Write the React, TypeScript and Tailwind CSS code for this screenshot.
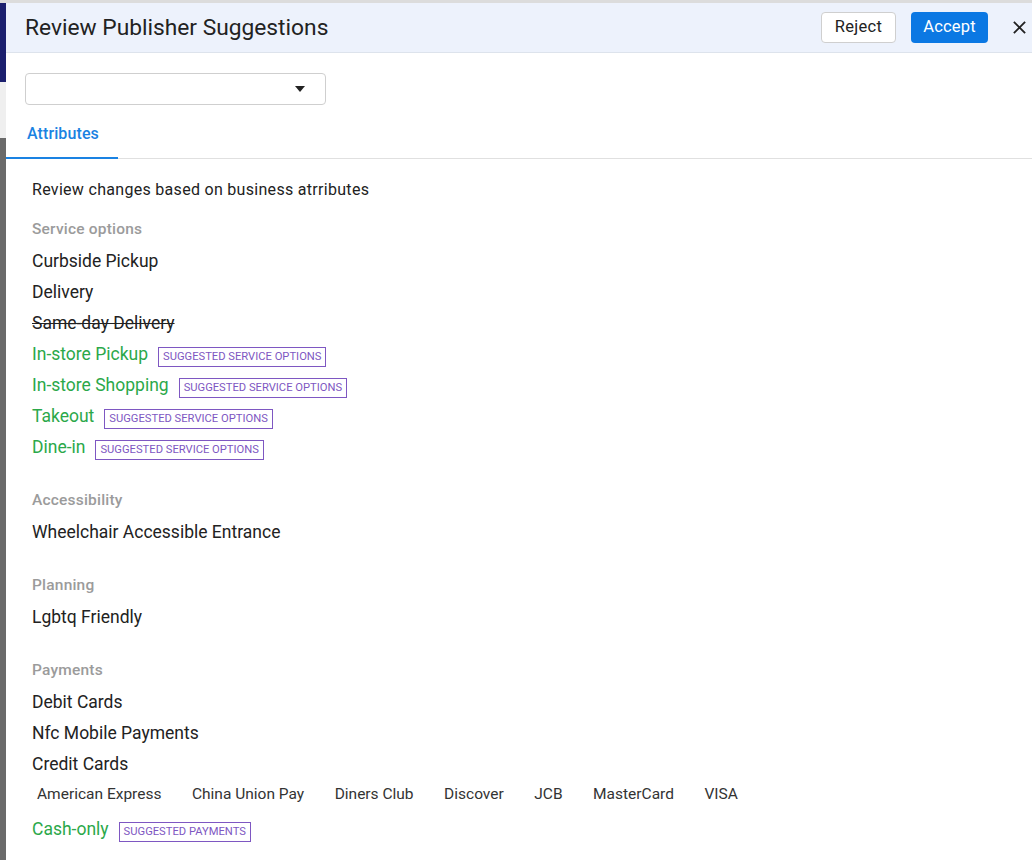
import React from 'react'

type Item = { label: string; kind?: 'normal' | 'removed' | 'suggested'; tag?: string }

interface Section {
  title: string
  items: Item[]
}

const sections: Section[] = [
  {
    title: 'Service options',
    items: [
      { label: 'Curbside Pickup' },
      { label: 'Delivery' },
      { label: 'Same-day Delivery', kind: 'removed' },
      { label: 'In-store Pickup', kind: 'suggested', tag: 'Suggested service options' },
      { label: 'In-store Shopping', kind: 'suggested', tag: 'Suggested service options' },
      { label: 'Takeout', kind: 'suggested', tag: 'Suggested service options' },
      { label: 'Dine-in', kind: 'suggested', tag: 'Suggested service options' },
    ],
  },
  { title: 'Accessibility', items: [{ label: 'Wheelchair Accessible Entrance' }] },
  { title: 'Planning', items: [{ label: 'Lgbtq Friendly' }] },
]

const cards = ['American Express', 'China Union Pay', 'Diners Club', 'Discover', 'JCB', 'MasterCard', 'VISA']

const Row = ({ item }: { item: Item }) => (
  <div className="flex items-center h-[31px]">
    <span
      className={
        item.kind === 'suggested'
          ? 'text-[17.5px] text-[#2ba84a]'
          : item.kind === 'removed'
          ? 'text-[17.5px] text-[#222] line-through'
          : 'text-[17.5px] text-[#222]'
      }
    >
      {item.label}
    </span>
    {item.tag && (
      <span className="ml-[10px] mt-[4px] border border-[#7e57c2] text-[#7e57c2] text-[11.2px] uppercase leading-none px-[4px] h-[20px] flex items-center">
        {item.tag}
      </span>
    )}
  </div>
)

const SectionTitle = ({ children }: { children: React.ReactNode }) => (
  <div className="text-[15.5px] tracking-[0.2px] font-medium text-[#9b9b9b] h-[20px] leading-[20px] mb-[7px]">{children}</div>
)

export default function App() {
  return (
    <div className="flex w-[1032px] h-[860px] overflow-hidden bg-white" style={{ fontFamily: 'Roboto, "Liberation Sans", sans-serif' }}>
      {/* backdrop strip */}
      <div className="w-[6px] flex flex-col shrink-0">
        <div className="h-[3px] bg-[#dcdcdc]" />
        <div className="h-[79px] bg-[#1b1f6e]" />
        <div className="h-[56px] bg-[#efefef]" />
        <div className="flex-1 bg-[#6a6a6a]" />
      </div>

      <div className="flex-1 flex flex-col">
        <div className="h-[3px] bg-[#dcdcdc]" />
        {/* Header */}
        <div className="h-[50px] bg-[#edf2fc] border-b border-[#dde3ec] flex items-center pl-[19px] pr-[5px]">
          <h2 className="text-[22.75px] text-[#222] flex-1 pt-[2px]">Review Publisher Suggestions</h2>
          <button className="h-[31px] w-[75px] border border-[#cfcfcf] bg-white rounded-[4px] text-[16.5px] tracking-[0.3px] text-[#222]">Reject</button>
          <button className="ml-[15px] h-[31px] w-[77px] bg-[#0b78e3] rounded-[4px] text-[16.5px] tracking-[0.2px] text-white">Accept</button>
          <button className="ml-[23px] w-[16px] h-[16px] flex items-center justify-center">
            <svg viewBox="0 0 16 16" className="w-[15px] h-[15px]" fill="none" stroke="#222" strokeWidth="2">
              <path d="M2 2l12 12M14 2L2 14" />
            </svg>
          </button>
        </div>

        {/* Dropdown */}
        <div className="pl-[19px] pt-[20px]">
          <div className="w-[301px] h-[32px] border border-[#cfcfcf] rounded-[4px] flex items-center justify-end pr-[20px]">
            <svg viewBox="0 0 10 6" className="w-[10px] h-[6px]">
              <path d="M0 0h10L5 6z" fill="#222" />
            </svg>
          </div>
        </div>

        {/* Tabs */}
        <div className="mt-[11px] border-b border-[#e0e0e0] flex">
          <div className="w-[112px] h-[43px] border-b-2 border-[#1a82e2] -mb-px pl-[21px] pt-[6px] text-[16px] tracking-[0.1px] font-medium text-[#1a82e2]">
            Attributes
          </div>
        </div>

        {/* Content */}
        <div className="pl-[26px] pt-[21px]">
          <div className="text-[16px] tracking-[0.3px] text-[#222] h-[20px] leading-[20px]">Review changes based on business atrributes</div>
          {sections.map((s, i) => (
            <div key={s.title} className={i === 0 ? 'mt-[19px]' : 'mt-[27px]'}>
              <SectionTitle>{s.title}</SectionTitle>
              {s.items.map(it => (
                <Row key={it.label} item={it} />
              ))}
            </div>
          ))}
          <div className="mt-[27px]">
            <SectionTitle>Payments</SectionTitle>
            <Row item={{ label: 'Debit Cards' }} />
            <Row item={{ label: 'Nfc Mobile Payments' }} />
            <Row item={{ label: 'Credit Cards' }} />
            <div className="flex gap-[30.5px] pl-[5px] h-[30px] items-center text-[15.5px] text-[#333]">
              {cards.map(c => (
                <span key={c}>{c}</span>
              ))}
            </div>
            <div className="mt-[4px]">
              <Row item={{ label: 'Cash-only', kind: 'suggested', tag: 'Suggested payments' }} />
            </div>
          </div>
        </div>
      </div>
    </div>
  )
}
